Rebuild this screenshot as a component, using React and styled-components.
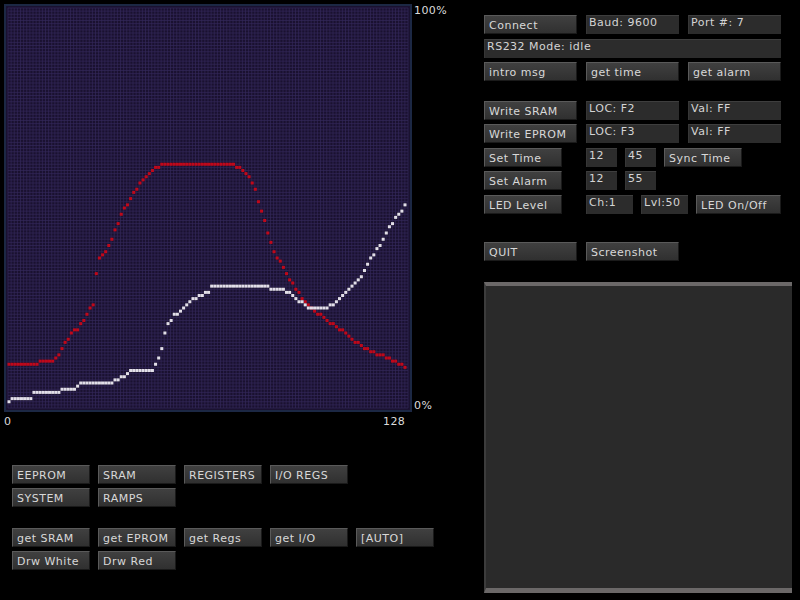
import React from 'react';
import styled, { createGlobalStyle } from 'styled-components';

const GlobalStyle = createGlobalStyle`
  html, body {
    margin: 0;
    padding: 0;
    background: #000;
  }
  body {
    font-family: "DejaVu Sans", Verdana, sans-serif;
  }
`;

// plot geometry (svg coords)
const X0 = 9;
const STEP = (405 - 9) / 127;
const GRID = 400 / 128;

const redKeys = [
  [9, 365], [33, 365], [37, 363], [47, 361], [55, 359], [58, 357], [62, 350], [67, 340],
  [72, 333], [78, 328], [83, 322], [87, 315], [90, 307], [94, 303], [97, 265], [100, 258],
  [107, 249], [113, 237], [117, 225], [123, 212], [128, 203], [132, 197], [135, 191],
  [140, 183], [147, 175], [152, 170], [157, 168], [162, 165], [235, 165], [240, 168],
  [245, 172], [250, 178], [253, 183], [256, 192], [260, 206], [263, 218], [266, 225],
  [270, 241], [275, 253], [280, 262], [285, 270], [290, 280], [295, 287], [300, 295],
  [305, 300], [310, 306], [315, 311], [320, 315], [330, 322], [340, 330], [347, 333],
  [353, 340], [363, 347], [373, 353], [383, 355], [397, 363], [405, 366],
];

const whiteKeys = [
  [9, 403], [12, 400], [28, 400], [31, 397], [34, 393], [60, 393], [62, 390], [66, 388],
  [77, 388], [79, 384], [110, 384], [113, 381], [120, 379], [124, 376], [130, 372],
  [154, 372], [156, 360], [159, 356], [162, 347], [166, 328], [169, 322], [173, 317],
  [177, 313], [180, 311], [185, 306], [188, 303], [192, 300], [197, 297], [203, 294],
  [208, 292], [212, 287], [270, 287], [272, 290], [285, 290], [290, 293], [295, 297],
  [300, 302], [305, 305], [310, 308], [315, 309], [325, 309], [330, 306], [335, 302],
  [340, 297], [345, 292], [349, 290], [353, 285], [358, 280], [362, 275], [366, 268],
  [368, 262], [372, 257], [376, 250], [380, 245], [385, 238], [388, 229], [392, 225],
  [396, 218], [400, 213], [405, 206],
];

function sample(keys) {
  const pts = [];
  for (let i = 0; i < 128; i++) {
    const x = X0 + i * STEP;
    let y = keys[keys.length - 1][1];
    for (let k = 0; k < keys.length - 1; k++) {
      const [ax, ay] = keys[k];
      const [bx, by] = keys[k + 1];
      if (x >= ax && x <= bx) {
        y = ay + ((x - ax) / (bx - ax || 1)) * (by - ay);
        break;
      }
    }
    const yq = 8 + Math.round((y - 8) / GRID) * GRID;
    pts.push([x, yq]);
  }
  return pts;
}

const redPts = sample(redKeys);
const whitePts = sample(whiteKeys);

const Page = styled.div`
  display: flex;
  width: 800px;
  height: 600px;
  background: #000;
  overflow: hidden;
`;

const LeftCol = styled.div`
  width: 484px;
  display: flex;
  flex-direction: column;
`;

const RightCol = styled.div`
  display: flex;
  flex-direction: column;
  padding-top: 15px;
`;

const ChartSvg = styled.svg`
  display: block;
`;

const Label = styled.text`
  font-family: "DejaVu Sans", Verdana, sans-serif;
  font-size: 11px;
  letter-spacing: 0.4px;
  fill: #dcdcdc;
`;

const ButtonGrid = styled.div`
  display: grid;
  grid-template-columns: repeat(5, 78px);
  grid-auto-rows: 19px;
  column-gap: 8px;
  row-gap: 4px;
  padding-left: 12px;
  margin-top: ${p => p.$top}px;
`;

const Row = styled.div`
  display: flex;
  gap: ${p => p.$gap ?? 9}px;
  margin-top: ${p => p.$top ?? 0}px;
`;

const Btn = styled.button`
  width: ${p => (p.$w ? `${p.$w}px` : 'auto')};
  height: 19px;
  box-sizing: border-box;
  margin: 0;
  padding: 1px 0 0 4px;
  text-align: left;
  font-family: "DejaVu Sans", Verdana, sans-serif;
  font-size: 11px;
  letter-spacing: 0.5px;
  line-height: 15px;
  color: #d8d8d8;
  background: linear-gradient(#404040, #303030);
  border: 1px solid;
  border-color: #5a5a5a #1a1a1a #1a1a1a #5a5a5a;
  border-radius: 0;
  white-space: nowrap;
  overflow: hidden;
  cursor: pointer;
`;

const Field = styled.div`
  width: ${p => p.$w}px;
  height: 19px;
  box-sizing: border-box;
  padding: 0 0 0 2px;
  font-size: 11px;
  letter-spacing: 0.5px;
  line-height: 14px;
  color: #d4d4d4;
  background: #2c2c2c;
  border-top: 1px solid #3e3e3e;
  border-left: 1px solid #363636;
  white-space: nowrap;
  overflow: hidden;
`;

const Console = styled.div`
  width: 308px;
  height: 311px;
  box-sizing: border-box;
  margin-top: 21px;
  background: #2a2a2a;
  border-top: 4px solid #6b6868;
  border-bottom: 5px solid #6b6868;
  border-left: 2px solid #3c3c3c;
`;

function Chart() {
  const lines = [];
  for (let i = 0; i <= 128; i++) {
    const p = 8 + i * GRID;
    lines.push(<line key={'v' + i} x1={p} y1={8} x2={p} y2={408} />);
    lines.push(<line key={'h' + i} x1={8} y1={p} x2={408} y2={p} />);
  }
  return (
    <ChartSvg width="480" height="430" viewBox="0 0 480 430">
      <rect x="5" y="5" width="406" height="406" fill="#1a1130" stroke="#1c2844" strokeWidth="2" />
      <g stroke="#33285a" strokeWidth="0.7">{lines}</g>
      <g fill="#c0081a">
        {redPts.map(([x, y], i) => (
          <rect key={i} x={x - 1.5} y={y - 1.5} width="3" height="3" />
        ))}
      </g>
      <g fill="#e2dfe8">
        {whitePts.map(([x, y], i) => (
          <rect key={i} x={x - 1.5} y={y - 1.5} width="3" height="3" />
        ))}
      </g>
      <Label x="414" y="14">100%</Label>
      <Label x="414" y="409">0%</Label>
      <Label x="4" y="425">0</Label>
      <Label x="383" y="425">128</Label>
    </ChartSvg>
  );
}

export default function App() {
  return (
    <Page>
      <GlobalStyle />
      <LeftCol>
        <Chart />
        <ButtonGrid $top={35}>
          <Btn>EEPROM</Btn>
          <Btn>SRAM</Btn>
          <Btn>REGISTERS</Btn>
          <Btn>I/O REGS</Btn>
          <span />
          <Btn>SYSTEM</Btn>
          <Btn>RAMPS</Btn>
        </ButtonGrid>
        <ButtonGrid $top={21}>
          <Btn>get SRAM</Btn>
          <Btn>get EPROM</Btn>
          <Btn>get Regs</Btn>
          <Btn>get I/O</Btn>
          <Btn>[AUTO]</Btn>
          <Btn>Drw White</Btn>
          <Btn>Drw Red</Btn>
        </ButtonGrid>
      </LeftCol>
      <RightCol>
        <Row>
          <Btn $w={93}>Connect</Btn>
          <Field $w={93}>Baud: 9600</Field>
          <Field $w={93}>Port #: 7</Field>
        </Row>
        <Row $top={5}>
          <Field $w={297}>RS232 Mode: idle</Field>
        </Row>
        <Row $top={4}>
          <Btn $w={93}>intro msg</Btn>
          <Btn $w={93}>get time</Btn>
          <Btn $w={93}>get alarm</Btn>
        </Row>
        <Row $top={20}>
          <Btn $w={93}>Write SRAM</Btn>
          <Field $w={93}>LOC: F2</Field>
          <Field $w={93}>Val: FF</Field>
        </Row>
        <Row $top={4}>
          <Btn $w={93}>Write EPROM</Btn>
          <Field $w={93}>LOC: F3</Field>
          <Field $w={93}>Val: FF</Field>
        </Row>
        <Row $top={5} $gap={24}>
          <Btn $w={78}>Set Time</Btn>
          <Row $gap={8}>
            <Field $w={31}>12</Field>
            <Field $w={31}>45</Field>
            <Btn $w={78}>Sync Time</Btn>
          </Row>
        </Row>
        <Row $top={4} $gap={24}>
          <Btn $w={78}>Set Alarm</Btn>
          <Row $gap={8}>
            <Field $w={31}>12</Field>
            <Field $w={31}>55</Field>
          </Row>
        </Row>
        <Row $top={5} $gap={24}>
          <Btn $w={78}>LED Level</Btn>
          <Row $gap={8}>
            <Field $w={47}>Ch:1</Field>
            <Field $w={47}>Lvl:50</Field>
            <Btn $w={85}>LED On/Off</Btn>
          </Row>
        </Row>
        <Row $top={28}>
          <Btn $w={93}>QUIT</Btn>
          <Btn $w={93}>Screenshot</Btn>
        </Row>
        <Console />
      </RightCol>
    </Page>
  );
}
